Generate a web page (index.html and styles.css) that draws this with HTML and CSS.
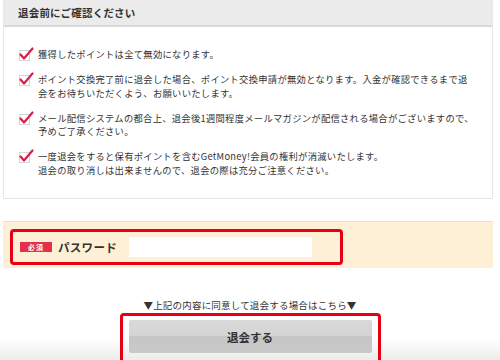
FILE: index.html
```html
<!DOCTYPE html>
<html lang="ja">
<head>
    <meta charset="UTF-8">
    <title>退会</title>
    <link rel="stylesheet" href="styles.css">
</head>
<body>
    <section class="notice">
        <h2 class="notice-title">退会前にご確認ください</h2>
        <ul class="notice-list">
            <li>
                <svg class="check" viewBox="0 0 16 14"><rect x="1.5" y="3.5" width="10" height="10" fill="#fff" stroke="#d6d6d6"/><path d="M2.5 7.5 L6 11.5 L14.5 1.5" fill="none" stroke="#d81e4a" stroke-width="2.2" stroke-linecap="round" stroke-linejoin="round"/></svg>
                <p>獲得したポイントは全て無効になります。</p>
            </li>
            <li>
                <svg class="check" viewBox="0 0 16 14"><rect x="1.5" y="3.5" width="10" height="10" fill="#fff" stroke="#d6d6d6"/><path d="M2.5 7.5 L6 11.5 L14.5 1.5" fill="none" stroke="#d81e4a" stroke-width="2.2" stroke-linecap="round" stroke-linejoin="round"/></svg>
                <p>ポイント交換完了前に退会した場合、ポイント交換申請が無効となります。入金が確認できるまで退<br>会をお待ちいただくよう、お願いいたします。</p>
            </li>
            <li>
                <svg class="check" viewBox="0 0 16 14"><rect x="1.5" y="3.5" width="10" height="10" fill="#fff" stroke="#d6d6d6"/><path d="M2.5 7.5 L6 11.5 L14.5 1.5" fill="none" stroke="#d81e4a" stroke-width="2.2" stroke-linecap="round" stroke-linejoin="round"/></svg>
                <p>メール配信システムの都合上、退会後1週間程度メールマガジンが配信される場合がございますので、<br>予めご了承ください。</p>
            </li>
            <li>
                <svg class="check" viewBox="0 0 16 14"><rect x="1.5" y="3.5" width="10" height="10" fill="#fff" stroke="#d6d6d6"/><path d="M2.5 7.5 L6 11.5 L14.5 1.5" fill="none" stroke="#d81e4a" stroke-width="2.2" stroke-linecap="round" stroke-linejoin="round"/></svg>
                <p>一度退会をすると保有ポイントを含むGetMoney!会員の権利が消滅いたします。<br>退会の取り消しは出来ませんので、退会の際は充分ご注意ください。</p>
            </li>
        </ul>
    </section>

    <form class="withdraw-form">
        <div class="password-band">
            <div class="password-row">
                <span class="badge">必須</span>
                <label class="password-label">パスワード</label>
                <input type="password" class="password-input">
            </div>
        </div>

        <p class="agree">▼上記の内容に同意して退会する場合はこちら▼</p>
        <div class="submit-frame">
            <button type="button" class="submit">退会する</button>
        </div>
    </form>
</body>
</html>
```

FILE: styles.css
```css
body {
    margin: 0;
    padding: 0;
    font-family: "Noto Sans CJK JP", "Liberation Sans", sans-serif;
    color: #333;
    background: linear-gradient(to bottom, #fff 0, #fff 338px, #ececec 360px);
    min-height: 360px;
    overflow: hidden;
}

.notice {
    margin: 0 7px 0 3px;
    border: 1px solid #e6e6e6;
    border-top: none;
    background-color: #fff;
}

.notice-title {
    margin: 0;
    height: 25px;
    padding-left: 14px;
    font-size: 10.5px;
    font-weight: bold;
    line-height: 25px;
    letter-spacing: 0.2px;
    background-color: #ebebeb;
    border-bottom: 2px solid #d9d9d9;
}

.notice-list {
    list-style: none;
    margin: 0;
    padding: 21px 0 21px 14px;
}

.notice-list li {
    display: flex;
    align-items: flex-start;
    margin-bottom: 11.5px;
}

.notice-list li:last-child {
    margin-bottom: 0;
}

.check {
    flex: none;
    width: 16px;
    height: 14px;
    margin-top: -1px;
    margin-right: 4px;
}

.notice-list p {
    margin: 0;
    font-size: 9.3px;
    line-height: 13.5px;
    letter-spacing: 0.28px;
    white-space: nowrap;
}

.withdraw-form {
    margin: 22px 0 0;
}

.password-band {
    margin: 0 7px 0 3px;
    padding: 7px 0 3px 7px;
    background-color: #fdf0d6;
    border-top: 1px solid #f3dfb8;
}

.password-row {
    display: flex;
    align-items: center;
    width: 313px;
    height: 30px;
    padding: 0 7px;
    border: 3px solid #e60012;
    border-radius: 4px;
}

.badge {
    width: 32px;
    height: 10px;
    font-size: 7px;
    font-weight: bold;
    line-height: 10px;
    letter-spacing: 1px;
    text-align: center;
    color: #fff;
    background-color: #e4304a;
}

.password-label {
    margin-left: 6px;
    font-size: 11.5px;
    font-weight: bold;
    letter-spacing: 0.3px;
    color: #333;
}

.password-input {
    width: 183px;
    height: 20px;
    margin-left: 12px;
    padding: 0;
    border: none;
    background-color: #fff;
}

.agree {
    margin: 31px 0 0;
    font-size: 9.5px;
    line-height: 12px;
    letter-spacing: 0.2px;
    text-align: center;
    color: #333;
}

.submit-frame {
    width: 243px;
    margin: 2px auto 0;
    padding: 4px 6px 10px;
    border: 3px solid #e60012;
    border-radius: 4px;
}

.submit {
    display: block;
    width: 100%;
    height: 33px;
    border: none;
    border-radius: 2px;
    font-family: "Noto Sans CJK JP", "Liberation Sans", sans-serif;
    font-size: 11.5px;
    font-weight: bold;
    color: #333;
    background: linear-gradient(to bottom, #d9d9d9 0, #d4d4d4 50%, #c6c6c6 50%, #c9c9c9 100%);
}
```
